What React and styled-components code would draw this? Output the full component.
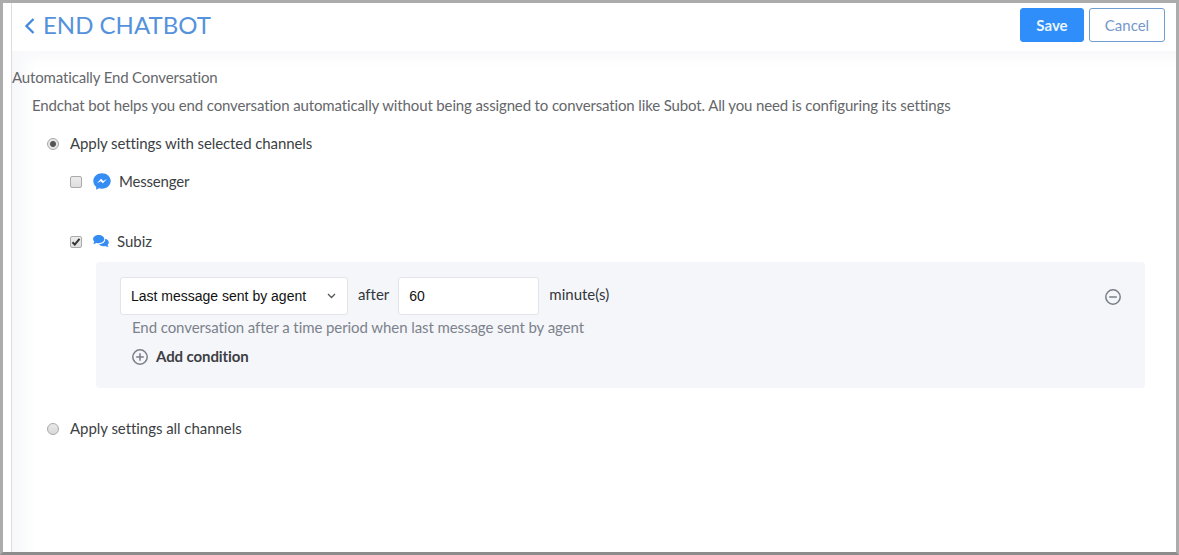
import React from "react";
import styled, { createGlobalStyle } from "styled-components";

const Global = createGlobalStyle`
  * { box-sizing: border-box; }
  body { margin: 0; background: #acacac; font-family: Lato, "Open Sans", sans-serif; font-size: 15px; color: #3c3f44; font-variant-ligatures: none; }
`;
const Frame = styled.div`
  display: flex; width: 1179px; height: 555px; overflow: hidden;
  border: 3px solid #acacac; background: #fff;
  border-bottom-color: #8c8c8c;
`;
const Gutter = styled.div`flex: 0 0 9px; border-right: 1px solid #dcdde0;`;
const Page = styled.main`
  flex: 1; display: flex; flex-direction: column; min-width: 0;
`;
const Header = styled.header`
  flex: 0 0 48px; display: flex; align-items: flex-start; justify-content: space-between;
  padding: 5px 11px 0 12px;
`;
const Title = styled.h1`
  margin: 0; display: flex; align-items: center; height: 36px; gap: 8px;
  font-size: 24px; font-weight: 400; color: #5592dc; letter-spacing: 0; white-space: nowrap;
`;
const TitleText = styled.span`padding-bottom: 3px;`;
const Actions = styled.div`display: flex; gap: 5px;`;
const Button = styled.button`
  width: ${(p) => (p.$primary ? 64 : 76)}px; height: 34px; padding: 0 0 1px; border-radius: 3px;
  font: ${(p) => (p.$primary ? 700 : 400)} 15px Lato, sans-serif;
  border: 1px solid ${(p) => (p.$primary ? "#2f8efa" : "#6f9dd0")};
  background: ${(p) => (p.$primary ? "#2f8efa" : "#fff")};
  color: ${(p) => (p.$primary ? "#eaf6ff" : "#7399cc")};
`;
const Content = styled.section`
  flex: 1; display: flex; flex-direction: column; align-items: flex-start;
  background:
    linear-gradient(#f9f9fb, rgba(255, 255, 255, 0) 16px),
    linear-gradient(90deg, #f6f7fa, #fff 24px);
`;
const Text = styled.span`
  white-space: nowrap; line-height: 20px; letter-spacing: ${(p) => p.$track || 0}px;
  color: ${(p) => p.$color || "#3c3f44"}; font-weight: ${(p) => (p.$bold ? 700 : 400)};
`;
const Intro = styled.div`
  display: flex; flex-direction: column; gap: 8px; padding: 16px 0 1px;
  & > :last-child { margin-left: 20px; }
`;
const Option = styled.label`
  display: flex; align-items: center; height: 20px;
  margin: ${(p) => p.$top}px 0 0 ${(p) => p.$indent}px;
`;
const Radio = styled.span`
  width: 12px; height: 12px; margin: 1px 11px 0 0; border-radius: 50%; border: 1px solid #a9a9a9;
  background: ${(p) =>
    p.$on ? "radial-gradient(circle, #555 0 2.5px, #e5e5e5 3.5px)" : "linear-gradient(#e9e9e9, #d9d9d9)"};
`;
const Checkbox = styled.span`
  display: grid; place-items: center; width: 12px; height: 12px; margin: 1px 11px 0 0;
  border: 1px solid #ababab; border-radius: 2px; background: linear-gradient(#ececec, #dfdfdf);
`;
const Icon = styled.svg`
  display: block; flex: none; margin-right: ${(p) => p.$gap || 0}px;
`;
const Panel = styled.div`
  display: flex; justify-content: space-between; width: 1049px; height: 126px;
  margin: 11px 0 0 84px; padding: 15px 24px 0 24px; border-radius: 4px; background: #f5f6fa;
`;
const Condition = styled.div`display: flex; flex-direction: column;`;
const Fields = styled.div`display: flex; align-items: center; height: 38px;`;
const Field = styled.div`
  display: flex; align-items: center; justify-content: space-between;
  width: ${(p) => p.$width}px; height: 38px; padding: 0 11px 0 10px;
  border: 1px solid #e2e4e9; border-radius: 3px; background: #fff;
  font: 14px "Liberation Sans", Arial, sans-serif; color: #111; white-space: nowrap;
`;
const Word = styled(Text)`margin: 0 ${(p) => p.$right || 10}px 4px 10px; color: #33363b;`;
const Hint = styled(Text)`margin: 2px 0 0 12px;`;
const Add = styled.div`display: flex; align-items: center; height: 20px; margin: 10px 0 0 12px;
  & > span { padding-bottom: 2px; }
`;
const Remove = styled.div`padding-top: 12px;`;

const Circled = ({ plus, gap }) => (
  <Icon $gap={gap} width="16" height="16" viewBox="0 0 16 16" fill="none" stroke="#797e87" strokeWidth="1.5">
    <circle cx="8" cy="8" r="7.2" />
    <path d={plus ? "M4.2 8h7.6M8 4.2v7.6" : "M4.2 8h7.6"} />
  </Icon>
);

export default function App() {
  return (
    <>
      <Global />
      <Frame>
        <Gutter />
        <Page>
          <Header>
            <Title>
              <Icon width="11" height="18" viewBox="0 0 11 18" fill="none" stroke="#4089e0" strokeWidth="2.3">
                <path d="M9.5 2L2.500 9l7 7" />
              </Icon>
              <TitleText>END CHATBOT</TitleText>
            </Title>
            <Actions>
              <Button $primary>Save</Button>
              <Button>Cancel</Button>
            </Actions>
          </Header>
          <Content>
            <Intro>
              <Text $color="#65676b" $track={-0.15}>Automatically End Conversation</Text>
              <Text $color="#65676b" $track={-0.135}>
                Endchat bot helps you end conversation automatically without being assigned to conversation like
                Subot. All you need is configuring its settings
              </Text>
            </Intro>
            <Option $top={17} $indent={35}>
              <Radio $on />
              <Text $track={-0.1}>Apply settings with selected channels</Text>
            </Option>
            <Option $top={18} $indent={58}>
              <Checkbox />
              <Icon $gap={8} width="18" height="17" viewBox="0 0 18 17">
                <path fill="#358df3" d="M9 .2C4.1.2.3 3.7.3 8c0 2.4 1.1 4.4 2.9 5.8v3l2.8-1.5c.9.3 1.9.4 3 .4 4.9 0 8.7-3.4 8.7-7.7S13.900.2 9 .2z" />
                <path fill="#fff" d="M3.900 10.200l4.200-4.400 2.200 2.100 3.700-2-4.100 4.400-2.200-2.100z" />
              </Icon>
              <Text $track={-0.2}>Messenger</Text>
            </Option>
            <Option $top={40} $indent={58}>
              <Checkbox>
                <Icon width="10" height="10" viewBox="0 0 10 10" fill="none" stroke="#333" strokeWidth="2">
                  <path d="M1.500 5.200l2.300 2.400L8.500 1.800" />
                </Icon>
              </Checkbox>
              <Icon $gap={8} width="16" height="14" viewBox="0 0 17 14" fill="#358df3">
                <path d="M6 .5C2.700.5.100 2.400.100 5c0 1.100.500 2.100 1.300 2.900C1.200 8.700.700 9.500.200 10.100c1.400 0 2.600-.500 3.400-1 .8.2 1.600.3 2.400.3 3.400 0 6-1.900 6-4.400S9.400.5 6 .5z" />
                <path d="M13 4.600c.4 3.400-2.900 5.800-6.600 5.800.9 1.300 2.700 2.100 4.800 2.100.8 0 1.500-.1 2.100-.3.900.6 2 1 3.300 1-.5-.6-.9-1.300-1.100-2 .8-.7 1.300-1.600 1.300-2.600 0-1.800-1.500-3.400-3.800-4z" />
              </Icon>
              <Text>Subiz</Text>
            </Option>
            <Panel>
              <Condition>
                <Fields>
                  <Field $width={228}>
                    Last message sent by agent
                    <Icon width="9" height="6" viewBox="0 0 9 6" fill="none" stroke="#555" strokeWidth="1.3">
                      <path d="M1 1l3.500 3.500L8 1" />
                    </Icon>
                  </Field>
                  <Word $right={9}>after</Word>
                  <Field $width={141}>60</Field>
                  <Word>minute(s)</Word>
                </Fields>
                <Hint $color="#7c828c" $track={-0.08}>End conversation after a time period when last message sent by agent</Hint>
                <Add>
                  <Circled plus gap={8} />
                  <Text $bold $track={-0.1}>Add condition</Text>
                </Add>
              </Condition>
              <Remove><Circled /></Remove>
            </Panel>
            <Option $top={30} $indent={35}>
              <Radio />
              <Text $track={-0.05}>Apply settings all channels</Text>
            </Option>
          </Content>
        </Page>
      </Frame>
    </>
  );
}
